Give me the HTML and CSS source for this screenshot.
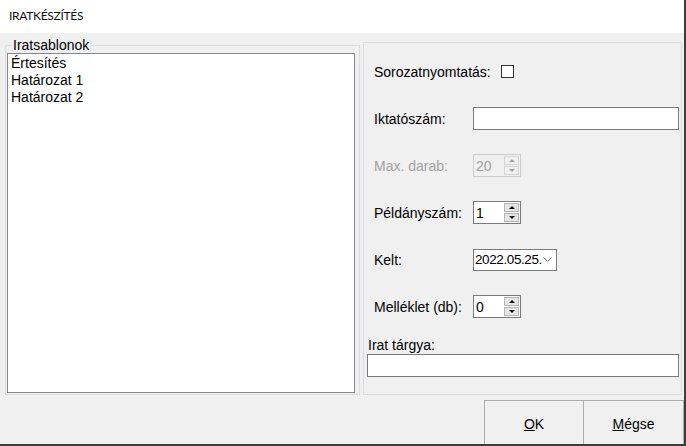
FILE: index.html
```html
<!DOCTYPE html>
<html lang="hu">
<head>
<meta charset="utf-8">
<title>Iratkészítés</title>
<link rel="stylesheet" href="styles.css">
</head>
<body>
<div id="dialog">
    <div class="titleBar">IRATKÉSZÍTÉS</div>

    <div class="dialogBody">
        <fieldset class="groupBox">
            <legend>Iratsablonok</legend>
            <ul class="listBox">
                <li>Értesítés</li>
                <li>Határozat 1</li>
                <li>Határozat 2</li>
            </ul>
        </fieldset>

        <div class="optionsPanel">
            <div class="fieldRows">
                <div class="fieldRow">
                    <span class="checkLabel">Sorozatnyomtatás:</span>
                    <span class="checkBox"></span>
                </div>
                <div class="fieldRow">
                    <span class="fieldLabel">Iktatószám:</span>
                    <span class="textBox wide"></span>
                </div>
                <div class="fieldRow disabled">
                    <span class="fieldLabel">Max. darab:</span>
                    <div class="spinBox">
                        <span class="spinValue">20</span>
                        <span class="spinButtons"><span class="spinUp"></span><span class="spinDown"></span></span>
                    </div>
                </div>
                <div class="fieldRow">
                    <span class="fieldLabel">Példányszám:</span>
                    <div class="spinBox">
                        <span class="spinValue">1</span>
                        <span class="spinButtons"><span class="spinUp"></span><span class="spinDown"></span></span>
                    </div>
                </div>
                <div class="fieldRow">
                    <span class="fieldLabel">Kelt:</span>
                    <div class="dateBox">
                        <span class="dateValue">2022.05.25.</span>
                        <svg class="dateArrow" width="9" height="6" viewBox="0 0 9 6"><polyline points="0.5,0.5 4.5,4.5 8.5,0.5" fill="none" stroke="#6d6d6d" stroke-width="1"/></svg>
                    </div>
                </div>
                <div class="fieldRow">
                    <span class="fieldLabel">Melléklet (db):</span>
                    <div class="spinBox">
                        <span class="spinValue">0</span>
                        <span class="spinButtons"><span class="spinUp"></span><span class="spinDown"></span></span>
                    </div>
                </div>
            </div>

            <div class="subjectBlock">
                <div class="subjectLabel">Irat tárgya:</div>
                <div class="textBox"></div>
            </div>
        </div>
    </div>

    <div class="buttonBar">
        <div class="dialogButton"><u>O</u>K</div>
        <div class="dialogButton"><u>M</u>égse</div>
    </div>
</div>
</body>
</html>
```

FILE: styles.css
```css
body {
    margin: 0;
    font-family: 'Liberation Sans', Arial, sans-serif;
    font-size: 14px;
    color: #000000;
}

#dialog {
    width: 686px;
    height: 446px;
    box-sizing: border-box;
    background-color: #f0f0f0;
    border-right: 2px solid #3c3c3c;
    border-bottom: 2px solid #3c3c3c;
    overflow: hidden;
}

.titleBar {
    height: 33px;
    line-height: 32px;
    padding-left: 9px;
    background-color: #ffffff;
    font-family: Lato, 'Liberation Sans', sans-serif;
    font-size: 12px;
    letter-spacing: -0.3px;
    color: #111111;
}

.dialogBody {
    display: flex;
    align-items: flex-start;
    padding-left: 5px;
}

.groupBox {
    width: 355px;
    box-sizing: border-box;
    margin: 4px 0 0 0;
    padding: 0 4px 1px 1px;
    border: 1px solid #dcdcdc;
    min-width: 0;
}

.groupBox legend {
    margin-left: 5px;
    padding: 0 1px;
    line-height: 16px;
}

.listBox {
    list-style: none;
    margin: 0;
    height: 340px;
    box-sizing: border-box;
    padding: 1px 3px;
    background-color: #ffffff;
    border: 1px solid #828790;
    line-height: 17px;
}

.optionsPanel {
    width: 319px;
    height: 353px;
    box-sizing: border-box;
    margin: 9px 0 0 3px;
    padding: 17px 2px 0 3px;
    border: 1px solid #dcdcdc;
}

.fieldRows {
    display: flex;
    flex-direction: column;
    gap: 24px;
}

.fieldRow {
    display: flex;
    align-items: center;
    height: 23px;
    padding-left: 7px;
}

.fieldRow.disabled {
    color: #a0a0a0;
}

.fieldLabel {
    width: 99px;
    flex-shrink: 0;
}

.checkLabel {
    margin-right: 10px;
}

.checkBox {
    width: 13px;
    height: 13px;
    box-sizing: border-box;
    border: 1px solid #333333;
    background-color: #ffffff;
}

.textBox {
    height: 23px;
    box-sizing: border-box;
    background-color: #ffffff;
    border: 1px solid #7a7a7a;
}

.textBox.wide {
    flex: 1;
}

.spinBox {
    width: 48px;
    height: 23px;
    box-sizing: border-box;
    display: flex;
    align-items: center;
    justify-content: space-between;
    padding: 1px 1px 1px 2px;
    background-color: #ffffff;
    border: 1px solid #7a7a7a;
}

.disabled .spinBox {
    background-color: #f0f0f0;
    border-color: #cccccc;
}

.spinButtons {
    width: 15px;
    height: 19px;
    display: flex;
    flex-direction: column;
    gap: 1px;
}

.spinUp,
.spinDown {
    flex: 1;
    display: flex;
    align-items: center;
    justify-content: center;
    background-color: #e5e5e5;
    border: 1px solid #b5b5b5;
}

.spinUp::after {
    content: "";
    border-left: 3px solid transparent;
    border-right: 3px solid transparent;
    border-bottom: 3px solid #000000;
}

.spinDown::after {
    content: "";
    border-left: 3px solid transparent;
    border-right: 3px solid transparent;
    border-top: 3px solid #000000;
}

.disabled .spinUp,
.disabled .spinDown {
    background-color: #f0f0f0;
    border-color: #d4d4d4;
}

.disabled .spinUp::after {
    border-bottom-color: #a0a0a0;
}

.disabled .spinDown::after {
    border-top-color: #a0a0a0;
}

.dateBox {
    width: 84px;
    height: 22px;
    box-sizing: border-box;
    display: flex;
    align-items: center;
    justify-content: space-between;
    padding: 0 4px 0 1px;
    background-color: #ffffff;
    border: 1px solid #7a7a7a;
    font-size: 13.5px;
    letter-spacing: -0.4px;
}

.subjectBlock {
    margin-top: 19px;
}

.subjectLabel {
    line-height: 16px;
    padding-left: 1px;
    margin-bottom: 1px;
}

.buttonBar {
    display: flex;
    justify-content: flex-end;
    padding: 5px 0 0 0;
}

.dialogButton {
    width: 100px;
    height: 52px;
    box-sizing: border-box;
    padding-top: 15px;
    text-align: center;
    background-color: #f0f0f0;
    border: 1px solid #adadad;
}

.dialogButton + .dialogButton {
    border-left: none;
}
```
